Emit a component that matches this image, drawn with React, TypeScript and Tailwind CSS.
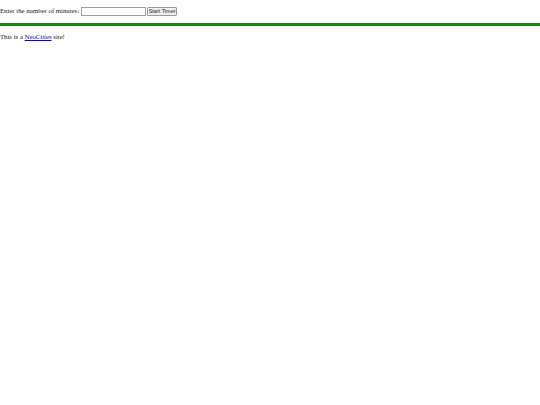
export default function App() {
  return (
    <div className="min-h-[405px] w-[540px] bg-white text-[6.75px] leading-none text-[#222]" style={{ fontFamily: '"Liberation Serif", serif' }}>
      <div className="flex items-center pt-[7px] h-[16px]">
        <span>Enter the number of minutes:</span>
        <span className="ml-[2px] h-[9px] w-[65px] border border-[#a0a0a0] bg-white" />
        <span className="ml-[1px] flex h-[9px] w-[30px] items-center justify-center rounded-[1px] border border-[#9a9a9a] bg-[#efefef] text-[5.5px]" style={{ fontFamily: '"Liberation Sans", sans-serif' }}>
          Start Timer
        </span>
      </div>
      <div className="mt-[7px] h-[3px] w-full bg-[#138a13]" />
      <p className="mt-[8px]">
        This is a <a href="#" className="text-[#0000ee] underline">NeoCities</a> site!
      </p>
    </div>
  );
}
